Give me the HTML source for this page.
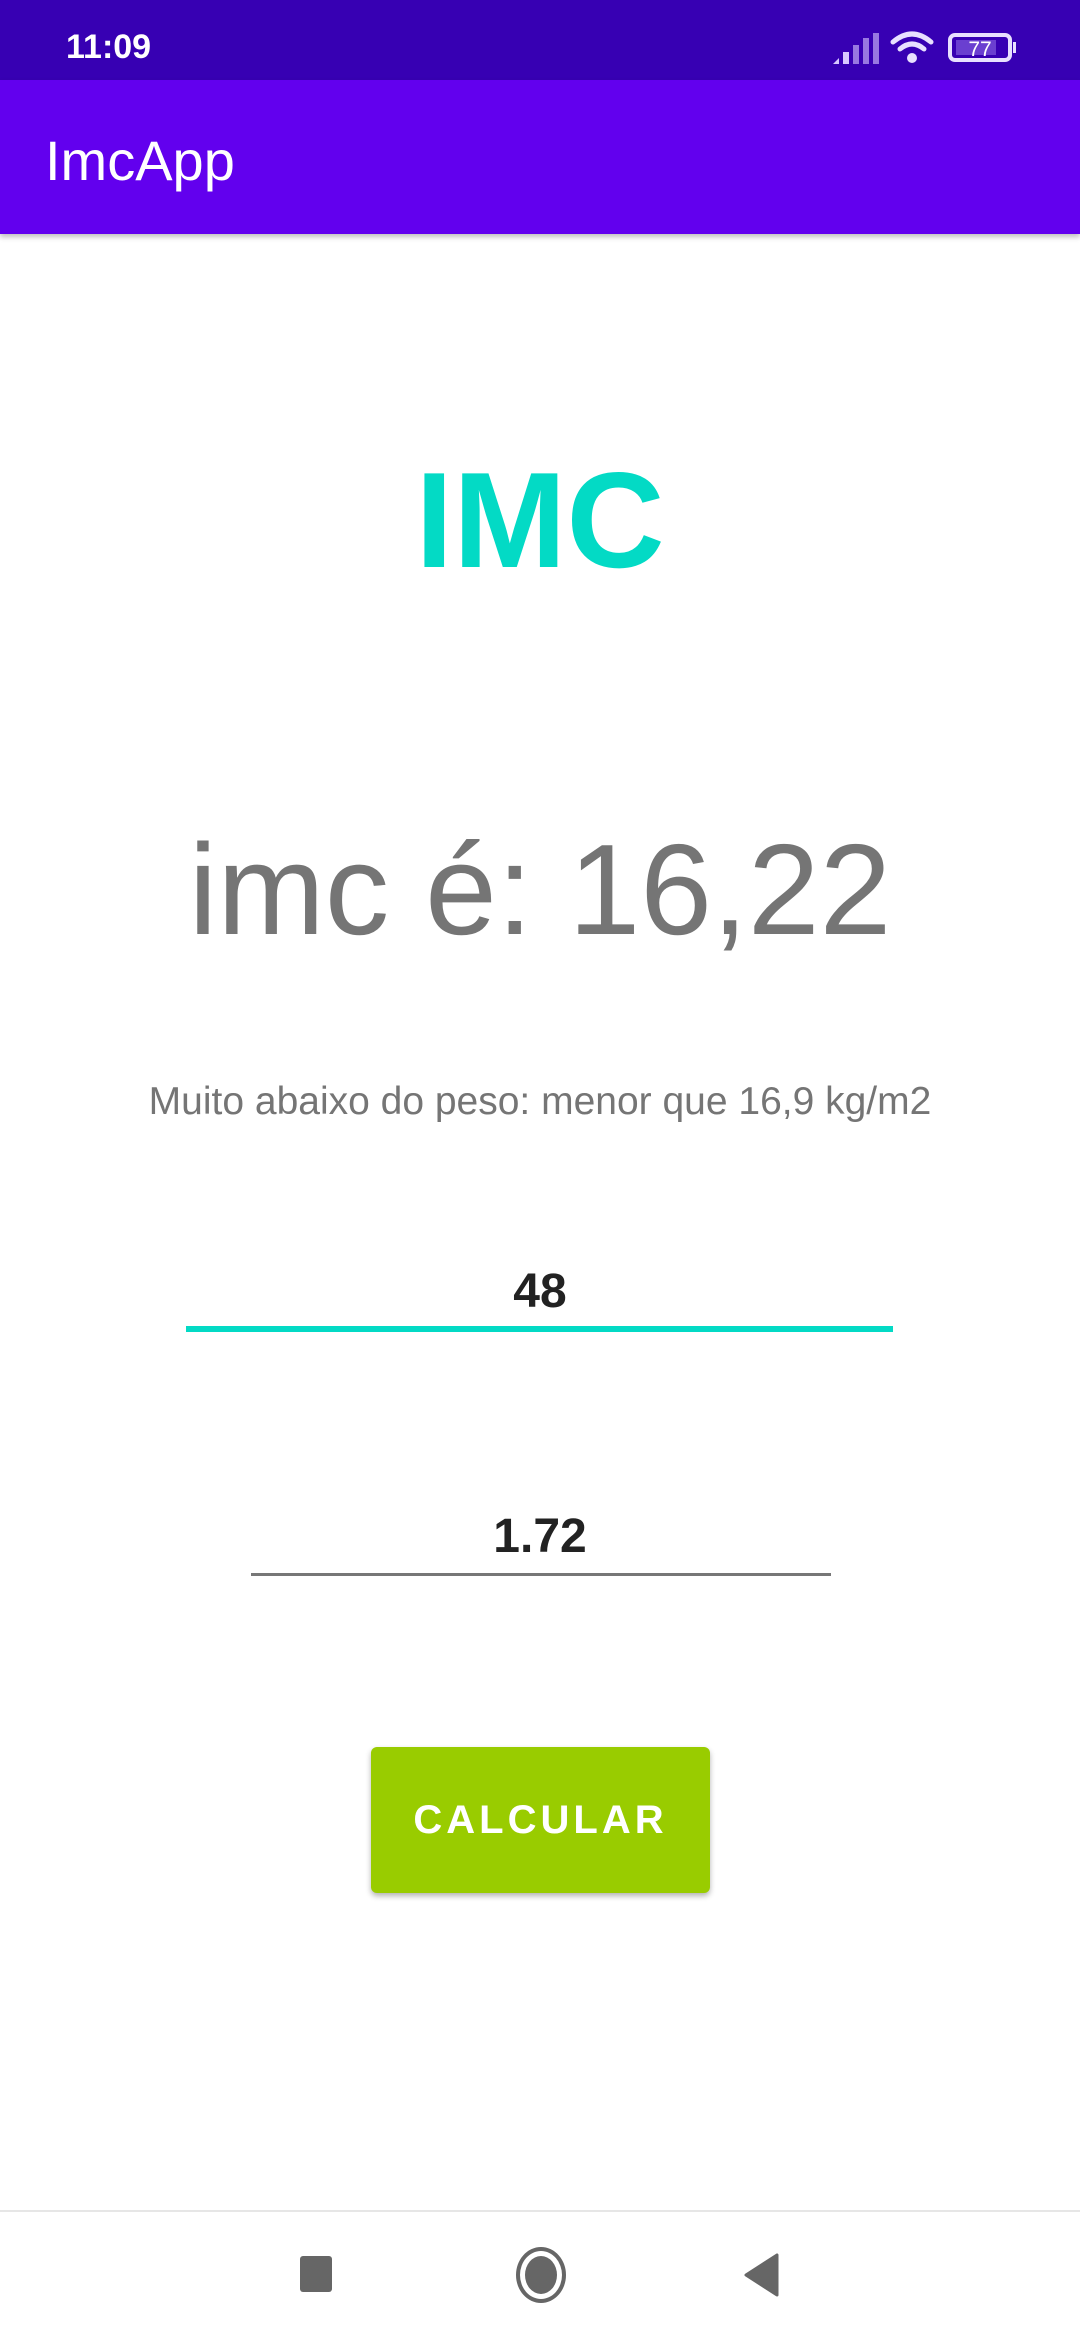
<!DOCTYPE html>
<html><head><meta charset="utf-8"><style>
*{margin:0;padding:0;box-sizing:border-box}
body{width:1080px;height:2340px;background:#fff;position:relative;font-family:"Liberation Sans",Roboto,sans-serif;overflow:hidden}
.abs{position:absolute}
.c{left:0;width:1080px;text-align:center}
</style></head><body>
<div class="abs" style="left:0;top:0;width:1080px;height:80px;background:#3700B3"></div>
<div class="abs" style="left:66px;top:28px;color:#fff;font-size:34px;font-weight:bold">11:09</div>
<svg class="abs" style="left:830px;top:28px" width="190" height="40" viewBox="0 0 190 40">
<g fill="#d8c8ff"><polygon points="3,36 9,30 9,36"/><rect x="13" y="24" width="6" height="12"/><rect x="23" y="17" width="6" height="19" opacity=".6"/><rect x="33" y="10" width="6" height="26" opacity=".6"/><rect x="43" y="5" width="6" height="31" opacity=".6"/></g>
<g fill="none" stroke="#e8e0ff" stroke-width="5" stroke-linecap="round"><path d="M63 14 Q82 -2 101 14"/><path d="M70 21 Q82 11 94 21"/></g>
<circle cx="82" cy="30" r="5" fill="#e8e0ff"/>
<rect x="120" y="7" width="60" height="25" rx="5" fill="none" stroke="#e8e0ff" stroke-width="4"/>
<rect x="126" y="12" width="40" height="15" fill="#6a3fd0"/>
<rect x="183" y="14" width="3" height="11" fill="#e8e0ff"/>
<text x="150" y="28" fill="#fff" font-size="21" text-anchor="middle" font-family="Liberation Sans">77</text>
</svg>
<div class="abs" style="left:0;top:80px;width:1080px;height:154px;background:#6200EE;box-shadow:0 3px 5px rgba(0,0,0,.25)"></div>
<div class="abs" style="left:45px;top:128px;color:#fff;font-size:56px">ImcApp</div>
<div class="abs c" style="top:435px;color:#03DAC5;font-size:136px;font-weight:bold;line-height:170px">IMC</div>
<div class="abs c" style="top:805px;color:#757575;font-size:129px;line-height:170px">imc é: 16,22</div>
<div class="abs c" style="top:1080px;color:#757575;font-size:39px;line-height:44px">Muito abaixo do peso: menor que 16,9 kg/m2</div>
<div class="abs c" style="top:1264px;color:#222;font-size:48px;font-weight:bold;line-height:56px">48</div>
<div class="abs" style="left:186px;top:1326px;width:707px;height:6px;background:#03DAC5"></div>
<div class="abs c" style="top:1509px;color:#222;font-size:48px;font-weight:bold;line-height:56px">1.72</div>
<div class="abs" style="left:251px;top:1573px;width:580px;height:3px;background:#777"></div>
<div class="abs" style="left:371px;top:1747px;width:339px;height:146px;background:#99CC00;border-radius:6px;box-shadow:0 3px 6px rgba(0,0,0,.3);color:#fff;font-size:40px;letter-spacing:4px;text-align:center;line-height:146px;font-weight:bold">CALCULAR</div>
<div class="abs" style="left:0;top:2210px;width:1080px;height:2px;background:#e6e6e6"></div>
<div class="abs" style="left:300px;top:2256px;width:32px;height:36px;background:#666;border-radius:3px"></div>
<div class="abs" style="left:516px;top:2247px;width:50px;height:56px;border:4px solid #666;border-radius:50%"></div>
<div class="abs" style="left:525px;top:2256px;width:32px;height:38px;background:#666;border-radius:50%"></div>
<svg class="abs" style="left:744px;top:2252px" width="36" height="46"><polygon points="2,23 33,3 33,43" fill="#666" stroke="#666" stroke-width="3" stroke-linejoin="round"/></svg>
</body></html>
